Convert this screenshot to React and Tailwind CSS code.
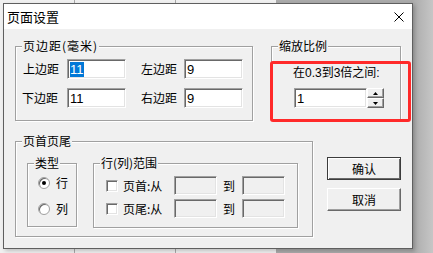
import React from 'react'

const etched = 'border border-[#a0a0a0] shadow-[inset_1px_1px_0_#fff,1px_1px_0_#fff]'
const sunken = 'border border-t-[#a0a0a0] border-l-[#a0a0a0] border-r-[#fff] border-b-[#fff] shadow-[inset_1px_1px_0_#696969,inset_-1px_-1px_0_#e3e3e3]'
const raised = 'border border-t-[#fff] border-l-[#fff] border-r-[#696969] border-b-[#696969] shadow-[inset_-1px_-1px_0_#a0a0a0]'

const Group = ({ title, className = '', titleClass = '', children }) => (
  <div className={`relative ${etched} ${className}`}>
    <span className={`absolute left-[6px] top-[-9px] bg-[#f0f0f0] px-[1px] leading-[16px] whitespace-nowrap ${titleClass}`}>{title}</span>
    {children}
  </div>
)

const Field = ({ value, selected, disabled, className = '' }) => (
  <div className={`${sunken} ${disabled ? 'bg-[#f0f0f0]' : 'bg-white'} h-[20px] flex items-center pl-[2px] ${className}`}>
    {value && (
      <span className={`font-['Liberation_Sans',sans-serif] text-[13px] leading-[15px] ${selected ? 'bg-[#0078d7] text-white' : ''}`}>{value}</span>
    )}
  </div>
)

const Radio = ({ checked, label, className = '' }) => (
  <div className={`flex items-center h-[16px] ${className}`}>
    <span className="w-[12px] h-[12px] rounded-full bg-white border border-[#a0a0a0] shadow-[inset_1px_1px_0_#696969] flex items-center justify-center">
      {checked && <span className="w-[4px] h-[4px] rounded-full bg-black" />}
    </span>
    <span className="ml-[6px]">{label}</span>
  </div>
)

const RangeRow = ({ label, className = '' }) => (
  <div className={`flex items-center h-[19px] ${className}`}>
    <span className={`w-[12px] h-[12px] bg-white ${sunken}`} />
    <span className="ml-[5px] w-[51px]">{label}</span>
    <Field disabled className="w-[43px] !h-[19px]" />
    <span className="ml-[6px] w-[19px]">到</span>
    <Field disabled className="w-[43px] !h-[19px]" />
  </div>
)

export default function App() {
  return (
    <div className="relative w-[433px] h-[253px] overflow-hidden bg-[linear-gradient(to_right,#f0f0f0_276px,#aaaaaa_276px,#aaaaaa_412px,#c6c6c6_433px)] pl-[3px] pt-[3px] font-['Noto_Sans_CJK_SC',sans-serif] text-[12px] text-black">
      {/* spreadsheet behind */}
      <div className="absolute left-[74px] top-0 w-px h-full bg-[#a8a8a8]" />
      <div className="absolute left-[175px] top-0 w-px h-full bg-[#a8a8a8]" />

      <div className="relative w-[410px] h-[246px] border border-[#5f5f5f] bg-[#f0f0f0] flex flex-col shadow-[2px_2px_4px_rgba(0,0,0,0.2)]">
        {/* Title bar */}
        <div className="h-[25px] bg-white flex items-center justify-between pl-[3px] pr-[8px]">
          <span className="text-[13px] leading-[16px]">页面设置</span>
          <svg width="10" height="10" viewBox="0 0 10 10">
            <path d="M0.5 0.5L9.5 9.5M9.5 0.5L0.5 9.5" stroke="#000" strokeWidth="1" />
          </svg>
        </div>

        {/* Body */}
        <div className="flex-1 pl-[11px] pr-[10px] pt-[17px]">
          <div className="flex">
            <Group title="页边距(毫米)" titleClass="tracking-[1px]" className="w-[238px] h-[75px] pt-[12px] pl-[7px]">
              <div className="flex items-center h-[20px]">
                <span className="w-[44px]">上边距</span>
                <Field value="11" selected className="w-[59px]" />
                <span className="ml-[15px] w-[43px]">左边距</span>
                <Field value="9" className="w-[59px]" />
              </div>
              <div className="flex items-center h-[20px] mt-[9px]">
                <span className="w-[44px] -ml-px">下边距</span>
                <Field value="11" className="w-[59px] ml-px" />
                <span className="ml-[15px] w-[43px]">右边距</span>
                <Field value="9" className="w-[59px]" />
              </div>
            </Group>

            <Group title="缩放比例" className="ml-[18px] w-[130px] h-[75px] pl-[21px] pt-[18px]">
              <div className="leading-[16px] font-['Liberation_Sans','Noto_Sans_CJK_SC',sans-serif]">在0.3到3倍之间:</div>
              <div className="flex mt-[7px] ml-px">
                <Field value="1" className="w-[73px]" />
                <div className="flex flex-col">
                  <div className={`w-[17px] h-[10px] bg-[#f0f0f0] ${raised} flex items-center justify-center`}>
                    <svg width="5" height="3" viewBox="0 0 5 3"><path d="M2.5 0L5 3H0Z" fill="#000" /></svg>
                  </div>
                  <div className={`w-[17px] h-[10px] bg-[#f0f0f0] ${raised} flex items-center justify-center`}>
                    <svg width="5" height="3" viewBox="0 0 5 3"><path d="M0 0H5L2.5 3Z" fill="#000" /></svg>
                  </div>
                </div>
              </div>
            </Group>
          </div>

          <div className="flex mt-[20px]">
            <Group title="页首页尾" className="w-[298px] h-[96px] pt-[21px] pl-[11px]">
              <div className="flex">
                <Group title="类型" className="w-[50px] h-[64px] pl-[10px] pt-[11px]">
                  <Radio checked label="行" />
                  <Radio label="列" className="mt-[10px]" />
                </Group>
                <Group title="行(列)范围" className="ml-[16px] w-[205px] h-[65px] pl-[12px] pt-[12px]">
                  <RangeRow label="页首:从" />
                  <RangeRow label="页尾:从" className="mt-[4px]" />
                </Group>
              </div>
            </Group>

            <div className="ml-[14px] pt-[16px] flex flex-col gap-[8px]">
              <button className="w-[74px] h-[23px] bg-[#f0f0f0] border border-[#3c3c3c] shadow-[inset_1px_1px_0_#fff,inset_-1px_-1px_0_#696969] leading-[16px]">确认</button>
              <button className={`w-[74px] h-[23px] bg-[#f0f0f0] ${raised} leading-[16px]`}>取消</button>
            </div>
          </div>
        </div>
      </div>

      {/* annotation highlight */}
      <div className="absolute left-[270px] top-[61px] w-[141px] h-[61px] border-[3px] border-[#ff2a2a] rounded-[3px]" />
    </div>
  )
}
